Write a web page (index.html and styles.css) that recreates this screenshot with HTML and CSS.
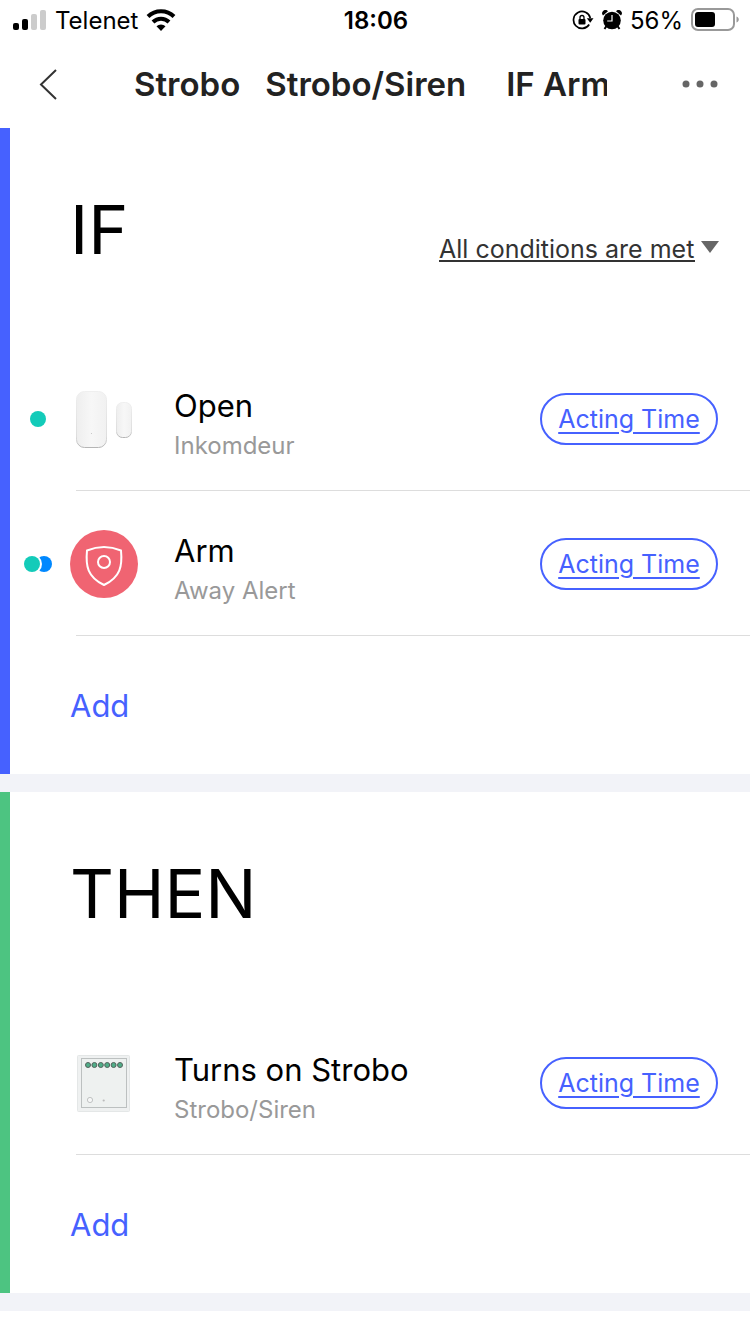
FILE: index.html
```html
<!DOCTYPE html>
<html lang="en">
<head>
    <meta charset="UTF-8">
    <meta name="viewport" content="width=device-width, initial-scale=1.0">
    <title>Strobo - Strobo/Siren - IF Arm</title>
    <link rel="stylesheet" href="styles.css">
</head>
<body>
    <div class="status-bar">
        <div class="status-left">
            <svg width="34" height="22" viewBox="0 0 34 22">
                <rect x="0" y="14" width="6" height="7" rx="2"/>
                <rect x="9" y="10" width="6" height="11" rx="2"/>
                <rect x="18" y="5" width="6" height="16" rx="2" fill="#ccc"/>
                <rect x="27" y="1" width="6" height="20" rx="2" fill="#ccc"/>
            </svg>
            <span class="carrier">Telenet</span>
            <svg width="30" height="22" viewBox="0 0 30 22">
                <path d="M2 7.500a18.500 18.500 0 0 1 26 0" fill="none" stroke="#000" stroke-width="4"/>
                <path d="M7 13a11.500 11.500 0 0 1 16 0" fill="none" stroke="#000" stroke-width="4"/>
                <path d="M10.500 17.300a6.500 6.500 0 0 1 9 0L15 22z"/>
            </svg>
        </div>
        <span class="clock">18:06</span>
        <div class="status-right">
            <svg width="22" height="20" viewBox="0 0 22 20">
                <path d="M17.200 14.500A8.500 8.500 0 1 1 18.300 8" fill="none" stroke="#000" stroke-width="1.700"/>
                <path d="M14.800 8.300h6.700l-3.300 4.500z"/>
                <rect x="6.500" y="9" width="7" height="5.500" rx="1"/>
                <path d="M8 9.500V7.500a2 2 0 0 1 4 0v2" fill="none" stroke="#000" stroke-width="1.300"/>
            </svg>
            <svg width="20" height="20" viewBox="0 0 20 20">
                <circle cx="10" cy="10.500" r="8.800"/>
                <path d="M1 5.500A3 3 0 0 1 6 1.200zM19 5.500A3 3 0 0 0 14 1.200z"/>
                <path d="M4.500 16L2.500 19M15.500 16l2 3" stroke="#000" stroke-width="2"/>
                <path d="M10 5v6H5.200" fill="none" stroke="#fff" stroke-width="1.200"/>
            </svg>
            <span class="percent">56%</span>
            <svg width="48" height="24" viewBox="0 0 48 24">
                <rect x="1" y="1" width="42" height="21" rx="6" fill="none" stroke="#999" stroke-width="2"/>
                <rect x="4" y="4" width="20" height="15" rx="3"/>
                <path d="M45.500 8.500c3 1 3 5 0 6z" fill="#999"/>
            </svg>
        </div>
    </div>

    <header class="nav">
        <button type="button" class="back" aria-label="Back">
            <svg width="20" height="32" viewBox="0 0 20 32"><path d="M18 2L3 16.500 18 31" fill="none" stroke="#333" stroke-width="2"/></svg>
        </button>
        <h1 class="title"><span>Strobo</span><span>Strobo/Siren</span><span>IF Arm</span></h1>
        <button type="button" class="more" aria-label="More">
            <svg width="36" height="8" viewBox="0 0 36 8" fill="#666"><circle cx="4" cy="4" r="3.500"/><circle cx="18" cy="4" r="3.500"/><circle cx="32" cy="4" r="3.500"/></svg>
        </button>
    </header>

    <main>
        <section class="block block-if">
            <div class="block-head">
                <h2>IF</h2>
                <div class="match">
                    <select aria-label="Condition matching">
                        <option>All conditions are met</option>
                    </select>
                    <svg width="18" height="12" viewBox="0 0 18 12"><path d="M0 0h18L9 12z" fill="#666"/></svg>
                </div>
            </div>
            <ul class="rows">
                <li class="row">
                    <svg class="dots" width="28" height="16" viewBox="0 0 28 16"><circle cx="14" cy="8" r="8" fill="#13cbb9"/></svg>
                    <svg class="icon" width="68" height="68" viewBox="0 0 68 68">
                        <defs>
                            <linearGradient id="shell" x1="0" x2="1" y1="0" y2="0">
                                <stop offset="0" stop-color="#eee"/>
                                <stop offset="0.500" stop-color="#f7f7f7"/>
                                <stop offset="1" stop-color="#f1f1f1"/>
                            </linearGradient>
                            <linearGradient id="edge" x1="0" x2="0" y1="0" y2="1">
                                <stop offset="0" stop-color="#efefef"/>
                                <stop offset="0.800" stop-color="#dedede"/>
                                <stop offset="1" stop-color="#b5b5b5"/>
                            </linearGradient>
                        </defs>
                        <rect x="6.500" y="6.500" width="30" height="56" rx="8" fill="url(#shell)" stroke="url(#edge)"/>
                        <rect x="46.500" y="17.500" width="15" height="35" rx="6" fill="url(#shell)" stroke="url(#edge)"/>
                        <circle cx="21.500" cy="48.500" r="0.500" fill="#bbb"/>
                    </svg>
                    <div class="text">
                        <h3>Open</h3>
                        <p>Inkomdeur</p>
                    </div>
                    <button type="button" class="pill">Acting Time</button>
                </li>
                <li class="row">
                    <svg class="dots" width="28" height="16" viewBox="0 0 28 16">
                        <circle cx="20" cy="8" r="8" fill="#0088ff"/>
                        <circle cx="8" cy="8" r="10" fill="#fff"/>
                        <circle cx="8" cy="8" r="8" fill="#13cbb9"/>
                    </svg>
                    <svg class="icon" width="68" height="68" viewBox="0 0 68 68">
                        <circle cx="34" cy="34" r="34" fill="#f06472"/>
                        <g fill="none" stroke="#fff" stroke-width="2">
                            <path d="M17 20.500Q34 13.500 51 20.500C52.500 36 50.500 47 34 55C17.500 47 15.500 36 17 20.500z" stroke-linejoin="round"/>
                            <circle cx="34" cy="32" r="6"/>
                        </g>
                    </svg>
                    <div class="text">
                        <h3>Arm</h3>
                        <p>Away Alert</p>
                    </div>
                    <button type="button" class="pill">Acting Time</button>
                </li>
            </ul>
            <button type="button" class="add">Add</button>
        </section>

        <section class="block block-then">
            <div class="block-head">
                <h2>THEN</h2>
            </div>
            <ul class="rows">
                <li class="row">
                    <span class="dots"></span>
                    <svg class="icon" width="68" height="68" viewBox="0 0 68 68">
                        <rect x="7.500" y="6.500" width="52" height="56" rx="1" fill="#eff1f1" stroke="#e4e7e7"/>
                        <rect x="11.500" y="9.500" width="45" height="49" fill="#eef1f0" stroke="#bcc0c0"/>
                        <g fill="#4fae88" stroke="#56625d">
                            <circle cx="18" cy="16" r="2.500"/>
                            <circle cx="24.400" cy="16" r="2.500"/>
                            <circle cx="30.800" cy="16" r="2.500"/>
                            <circle cx="37.200" cy="16" r="2.500"/>
                            <circle cx="43.600" cy="16" r="2.500"/>
                            <circle cx="50" cy="16" r="2.500"/>
                        </g>
                        <circle cx="20" cy="51" r="2.600" fill="#f6f7f7" stroke="#b2b5b5" stroke-width="0.800"/>
                        <circle cx="33.700" cy="51.500" r="1.100" fill="#bbb"/>
                    </svg>
                    <div class="text">
                        <h3>Turns on Strobo</h3>
                        <p>Strobo/Siren</p>
                    </div>
                    <button type="button" class="pill">Acting Time</button>
                </li>
            </ul>
            <button type="button" class="add">Add</button>
        </section>
    </main>
</body>
</html>
```
FILE: styles.css
```css
* {
    box-sizing: border-box;
}
body {
    font-family: Inter, "Liberation Sans", sans-serif;
    margin: 0;
    background-color: #fff;
    color: #000;
}
h1, h2, h3, p, ul {
    margin: 0;
    padding: 0;
    font-weight: 400;
}
button, select {
    font-family: inherit;
    background: none;
    border: none;
    margin: 0;
    padding: 0;
    cursor: pointer;
}
svg {
    display: block;
    flex: none;
}

/* status bar */
.status-bar {
    display: grid;
    grid-template-columns: 1fr auto 1fr;
    align-items: center;
    height: 40px;
    padding: 0 11px 0 13px;
    font-size: 24px;
}
.status-left, .status-right {
    display: flex;
    align-items: center;
    gap: 8px;
}
.status-right {
    justify-content: flex-end;
}
.clock {
    font-weight: 600;
}

/* title bar */
.nav {
    display: flex;
    align-items: center;
    height: 88px;
    padding: 0 32px 0 38px;
}
.back {
    width: 96px;
}
.title {
    flex: 1;
    display: flex;
    overflow: hidden;
    white-space: nowrap;
    font-size: 33px;
    font-weight: 600;
    line-height: 44px;
    color: #222;
}
.title span {
    margin-right: 25px;
}
.title span + span {
    margin-right: 40px;
}
.more {
    width: 111px;
}
.more svg {
    margin-left: auto;
}

/* IF / THEN blocks */
.block {
    border-left: 10px solid #4661ff;
    box-shadow: 0 18px 0 #f2f3f8;
    margin-bottom: 18px;
}
.block-then {
    border-left-color: #4dc481;
}
.block-head {
    display: flex;
    justify-content: space-between;
    align-items: flex-end;
    padding: 68px 31px 84px 60px;
}
.block-head h2 {
    font-size: 68px;
    line-height: 66px;
}
.match {
    display: flex;
    align-items: center;
    gap: 6px;
}
.match select {
    appearance: none;
    height: 30px;
    padding-top: 2px;
    border-bottom: 2px solid #333;
    border-radius: 0;
    font-size: 25px;
    color: #333;
}

.rows {
    list-style: none;
}
.row {
    position: relative;
    display: flex;
    align-items: center;
    height: 145px;
    padding: 0 32px 0 14px;
}
.row::after {
    content: "";
    position: absolute;
    left: 66px;
    right: 0;
    bottom: 0;
    height: 1px;
    background-color: #ddd;
}
.dots {
    width: 28px;
    overflow: visible;
}
.icon {
    margin: 0 36px 0 18px;
}
.text {
    flex: 1;
    padding-top: 10px;
}
.text h3 {
    font-size: 31px;
    line-height: 44px;
}
.text p {
    font-size: 24px;
    line-height: 36px;
    color: #999;
}
.pill {
    width: 178px;
    height: 52px;
    border: 2px solid #4661ff;
    border-radius: 26px;
    font-size: 25px;
    color: #4661ff;
    text-decoration: underline;
    text-decoration-thickness: 2px;
    text-underline-offset: 4px;
}
.add {
    display: block;
    height: 138px;
    padding: 0 60px;
    font-size: 31px;
    color: #4661ff;
}
```
